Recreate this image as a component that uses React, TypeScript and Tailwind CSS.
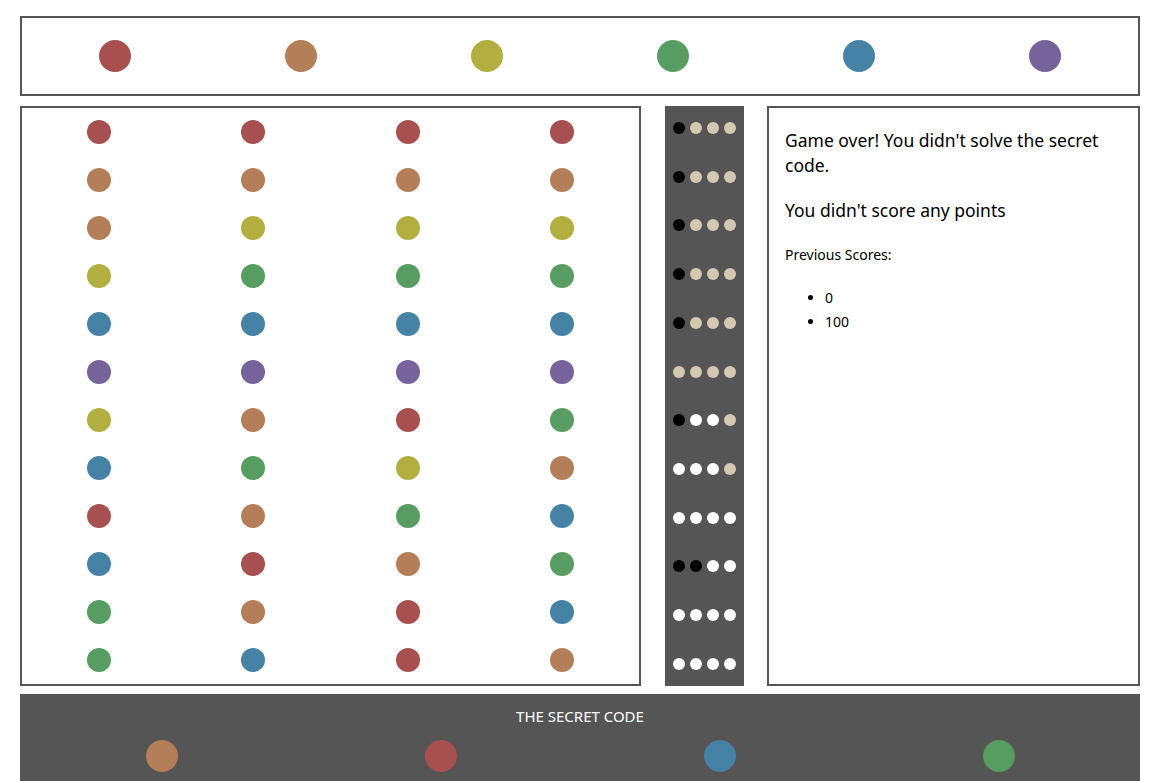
import React from "react";

const C: Record<string, string> = {
  R: "bg-[#a85050]",
  O: "bg-[#b47e59]",
  Y: "bg-[#b3ae40]",
  G: "bg-[#579c60]",
  B: "bg-[#4682a6]",
  P: "bg-[#77639b]",
};

const F: Record<string, string> = {
  k: "bg-black",
  t: "bg-[#d5c8b2]",
  w: "bg-white",
};

const rows = [
  "RRRR",
  "OOOO",
  "OYYY",
  "YGGG",
  "BBBB",
  "PPPP",
  "YORG",
  "BGYO",
  "ROGB",
  "BROG",
  "GORB",
  "GBRO",
];

const feedback = [
  "kttt",
  "kttt",
  "kttt",
  "kttt",
  "kttt",
  "tttt",
  "kwwt",
  "wwwt",
  "wwww",
  "kkww",
  "wwww",
  "wwww",
];

export default function App() {
  return (
    <div
      className="w-[1151px] h-[781px] overflow-hidden bg-white pl-[20px] pr-[11px] pt-[16px]"
      style={{ fontFamily: '"Noto Sans", "Open Sans", sans-serif' }}
    >
      {/* palette */}
      <div className="h-[80px] border-2 border-[#555555] flex items-center">
        {["R", "O", "Y", "G", "B", "P"].map((c) => (
          <div key={c} className="flex-1 flex justify-center">
            <div className={`w-[32px] h-[32px] rounded-full ${C[c]}`} />
          </div>
        ))}
      </div>

      <div className="mt-[10px] flex h-[580px]">
        {/* board */}
        <div className="w-[621px] border-2 border-[#555555] flex flex-col">
          {rows.map((r, i) => (
            <div key={i} className="h-[48px] flex items-center">
              {r.split("").map((c, j) => (
                <div key={j} className="flex-1 flex justify-center">
                  <div className={`w-[24px] h-[24px] rounded-full ${C[c]}`} />
                </div>
              ))}
            </div>
          ))}
        </div>

        {/* feedback */}
        <div className="ml-[24px] w-[79px] bg-[#555555] flex flex-col justify-between py-[16px] px-[8px]">
          {feedback.map((r, i) => (
            <div key={i} className="flex gap-[5px]">
              {r.split("").map((c, j) => (
                <div key={j} className={`w-[12px] h-[12px] rounded-full ${F[c]}`} />
              ))}
            </div>
          ))}
        </div>

        {/* info */}
        <div className="ml-[23px] flex-1 border-2 border-[#555555] px-[16px] pt-[20px] text-black">
          <p className="text-[17.5px] leading-[25px]">
            Game over! You didn't solve the secret code.
          </p>
          <p className="text-[17.5px] leading-[25px] mt-[20px]">You didn't score any points</p>
          <p className="text-[14px] leading-[20px] mt-[22px]">Previous Scores:</p>
          <ul className="mt-[21px] list-disc pl-[40px] text-[14px] leading-[24px]">
            <li>0</li>
            <li>100</li>
          </ul>
        </div>
      </div>

      {/* secret code */}
      <div className="mt-[8px] bg-[#555555] h-[120px] pt-[12px] px-[2px]">
        <div className="text-center text-white text-[15px] leading-[20px]">THE SECRET CODE</div>
        <div className="flex mt-[14px]">
          {["O", "R", "B", "G"].map((c) => (
            <div key={c} className="flex-1 flex justify-center">
              <div className={`w-[32px] h-[32px] rounded-full ${C[c]}`} />
            </div>
          ))}
        </div>
      </div>
    </div>
  );
}
